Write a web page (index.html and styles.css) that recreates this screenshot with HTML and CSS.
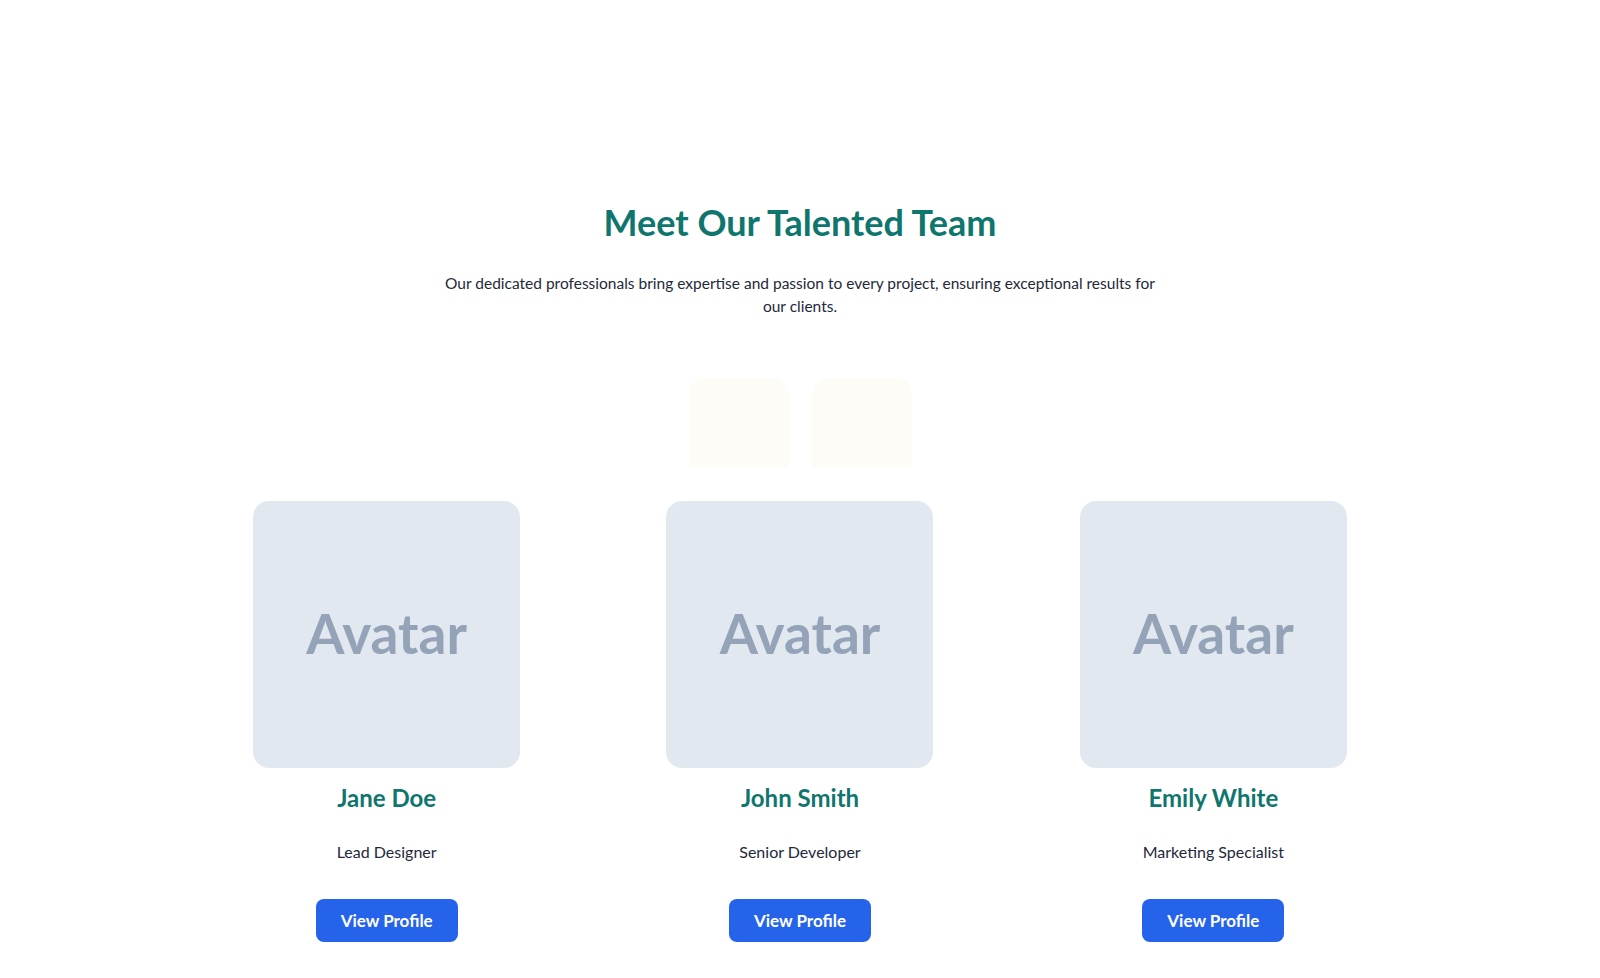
FILE: index.html
```html
<!DOCTYPE html>
<html lang="en">
<head>
<meta charset="utf-8">
<title>Our Team</title>
<link rel="stylesheet" href="styles.css">
</head>
<body>
<section class="team">
  <header class="team-head">
    <h2 class="team-title">Meet Our Talented Team</h2>
    <p class="team-lead">Our dedicated professionals bring expertise and passion to every project, ensuring exceptional results for our clients.</p>
  </header>

  <div class="team-decor" aria-hidden="true">
    <span class="decor-tile"></span>
    <span class="decor-tile"></span>
  </div>

  <div class="team-grid">
    <article class="member">
      <div class="member-avatar">Avatar</div>
      <h3 class="member-name">Jane Doe</h3>
      <p class="member-role">Lead Designer</p>
      <a class="member-btn" href="#">View Profile</a>
    </article>
    <article class="member">
      <div class="member-avatar">Avatar</div>
      <h3 class="member-name">John Smith</h3>
      <p class="member-role">Senior Developer</p>
      <a class="member-btn" href="#">View Profile</a>
    </article>
    <article class="member">
      <div class="member-avatar">Avatar</div>
      <h3 class="member-name">Emily White</h3>
      <p class="member-role">Marketing Specialist</p>
      <a class="member-btn" href="#">View Profile</a>
    </article>
  </div>
</section>
</body>
</html>
```

FILE: styles.css
```css
* {
  box-sizing: border-box;
}

html, body {
  margin: 0;
  padding: 0;
  background: #ffffff;
}

body {
  font-family: Lato, "Noto Sans", sans-serif;
  color: #1e293b;
}

.team {
  max-width: 1240px;
  margin: 0 auto;
  padding: 201px 0 0;
}

.team-head {
  text-align: center;
}

.team-title {
  margin: 0;
  font-size: 36px;
  line-height: 1.2;
  font-weight: 700;
  color: #0f766e;
}

.team-lead {
  max-width: 720px;
  margin: 28px auto 0;
  font-size: 15.5px;
  line-height: 22.4px;
  color: #1e293b;
}

.team-decor {
  display: flex;
  justify-content: center;
  gap: 23px;
  margin-top: 61px;
}

.decor-tile {
  width: 100px;
  height: 89px;
  background: #fdfcf6;
  border-radius: 16px 16px 4px 4px;
}

.team-grid {
  display: grid;
  grid-template-columns: repeat(3, 1fr);
  margin-top: 34px;
}

.member {
  display: flex;
  flex-direction: column;
  align-items: center;
  text-align: center;
}

.member-avatar {
  width: 267px;
  height: 267px;
  padding-bottom: 4px;
  border-radius: 16px;
  background: #e2e8f0;
  color: #94a3b8;
  font-family: Lato, sans-serif;
  font-weight: 700;
  font-size: 55px;
  display: flex;
  align-items: center;
  justify-content: center;
}

.member-name {
  margin: 16px 0 0;
  font-size: 24px;
  line-height: 1.2;
  font-weight: 700;
  color: #0f766e;
}

.member-role {
  margin: 28px 0 0;
  font-size: 16px;
  line-height: 1.4;
  color: #1e293b;
}

.member-btn {
  margin-top: 36px;
  display: inline-block;
  padding: 11px 25px;
  border-radius: 8px;
  background: #2563eb;
  color: #ffffff;
  font-size: 17px;
  line-height: 21px;
  font-weight: 700;
  text-decoration: none;
}
```
